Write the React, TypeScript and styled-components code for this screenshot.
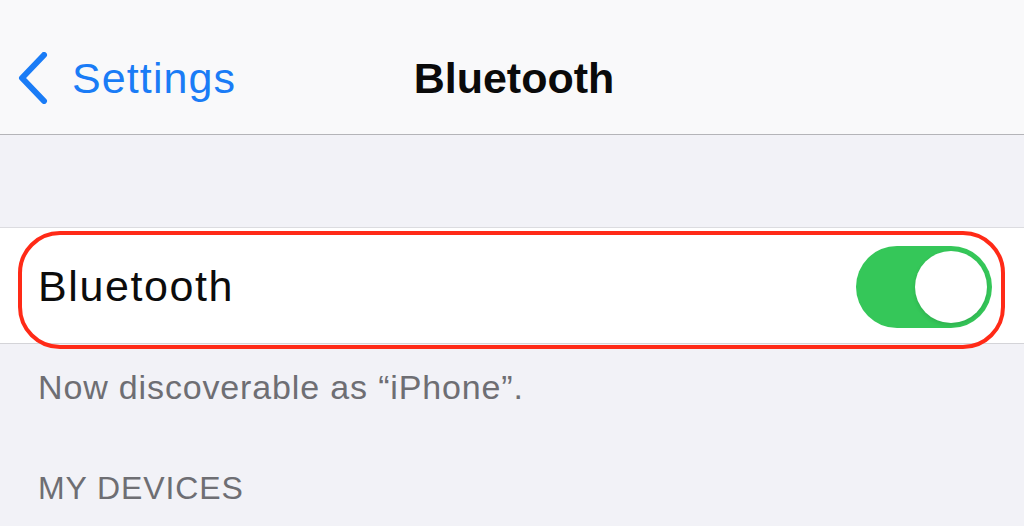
import React, { useState } from "react";
import styled, { createGlobalStyle } from "styled-components";

const GlobalStyle = createGlobalStyle`
  html, body {
    margin: 0;
    padding: 0;
    background: #f2f2f7;
    font-family: "Liberation Sans", Arial, sans-serif;
    -webkit-font-smoothing: antialiased;
  }
`;

const Page = styled.div`
  width: 1024px;
  height: 526px;
  overflow: hidden;
  background: #f2f2f7;
  display: flex;
  flex-direction: column;
`;

const NavBar = styled.header`
  position: relative;
  height: 135px;
  box-sizing: border-box;
  padding-top: 22px;
  flex-shrink: 0;
  background: #f9f9fa;
  border-bottom: 1px solid #b4b4b8;
  display: flex;
  align-items: center;
`;

const BackButton = styled.button`
  display: flex;
  align-items: center;
  gap: 24px;
  padding: 0 0 0 18px;
  background: none;
  border: none;
  color: #1a7cf6;
  font-family: inherit;
  font-size: 43px;
  letter-spacing: 1.1px;
  cursor: pointer;
`;

const Title = styled.h1`
  position: absolute;
  left: 0;
  right: 0;
  top: 22px;
  bottom: 0;
  margin: 0;
  display: flex;
  align-items: center;
  justify-content: center;
  padding-left: 4px;
  font-size: 43px;
  font-weight: 700;
  color: #0a0a0a;
  pointer-events: none;
`;

const Gap = styled.div`
  height: 92px;
  flex-shrink: 0;
`;

const Group = styled.section`
  position: relative;
  background: #ffffff;
  border-top: 1px solid #dcdce0;
  border-bottom: 1px solid #d4d4d8;
  height: 115px;
  flex-shrink: 0;
  display: flex;
  align-items: center;
  justify-content: space-between;
  padding: 0 32px 0 38px;
`;

const RowLabel = styled.span`
  font-size: 43px;
  letter-spacing: 1.6px;
  color: #0c0c0c;
  margin-top: 2px;
`;

const Track = styled.button<{ $on: boolean }>`
  position: relative;
  width: 136px;
  height: 82px;
  border-radius: 41px;
  border: none;
  padding: 0;
  margin-top: 2px;
  background: ${(p) => (p.$on ? "#35c759" : "#e9e9eb")};
  cursor: pointer;
`;

const Knob = styled.span<{ $on: boolean }>`
  position: absolute;
  top: 5px;
  left: ${(p) => (p.$on ? "59px" : "5px")};
  width: 72px;
  height: 72px;
  border-radius: 50%;
  background: #ffffff;
  box-shadow: 0 2px 4px rgba(0, 0, 0, 0.12);
`;

const Highlight = styled.div`
  position: absolute;
  left: 18px;
  right: 19px;
  top: 3px;
  bottom: -6px;
  border: 4px solid #ff2a17;
  border-radius: 42px;
  pointer-events: none;
`;

const Footer = styled.p`
  margin: 0;
  padding: 24px 0 0 38px;
  font-size: 34px;
  letter-spacing: 0.85px;
  color: #6e6e73;
`;

const SectionHeader = styled.h2`
  margin: 0;
  padding: 63px 0 0 38px;
  font-size: 32px;
  font-weight: 400;
  letter-spacing: 0.9px;
  color: #6e6e73;
`;

const Chevron = () => (
  <svg width="30" height="52" viewBox="0 0 30 52" fill="none">
    <path
      d="M26 3 L4 26 L26 49"
      stroke="#1a7cf6"
      strokeWidth="6"
      strokeLinecap="round"
      strokeLinejoin="round"
    />
  </svg>
);

export default function App() {
  const [on, setOn] = useState(true);

  return (
    <Page>
      <GlobalStyle />
      <NavBar>
        <BackButton>
          <Chevron />
          Settings
        </BackButton>
        <Title>Bluetooth</Title>
      </NavBar>
      <Gap />
      <Group>
        <RowLabel>Bluetooth</RowLabel>
        <Track $on={on} onClick={() => setOn(!on)}>
          <Knob $on={on} />
        </Track>
        <Highlight />
      </Group>
      <Footer>Now discoverable as “iPhone”.</Footer>
      <SectionHeader>MY DEVICES</SectionHeader>
    </Page>
  );
}
